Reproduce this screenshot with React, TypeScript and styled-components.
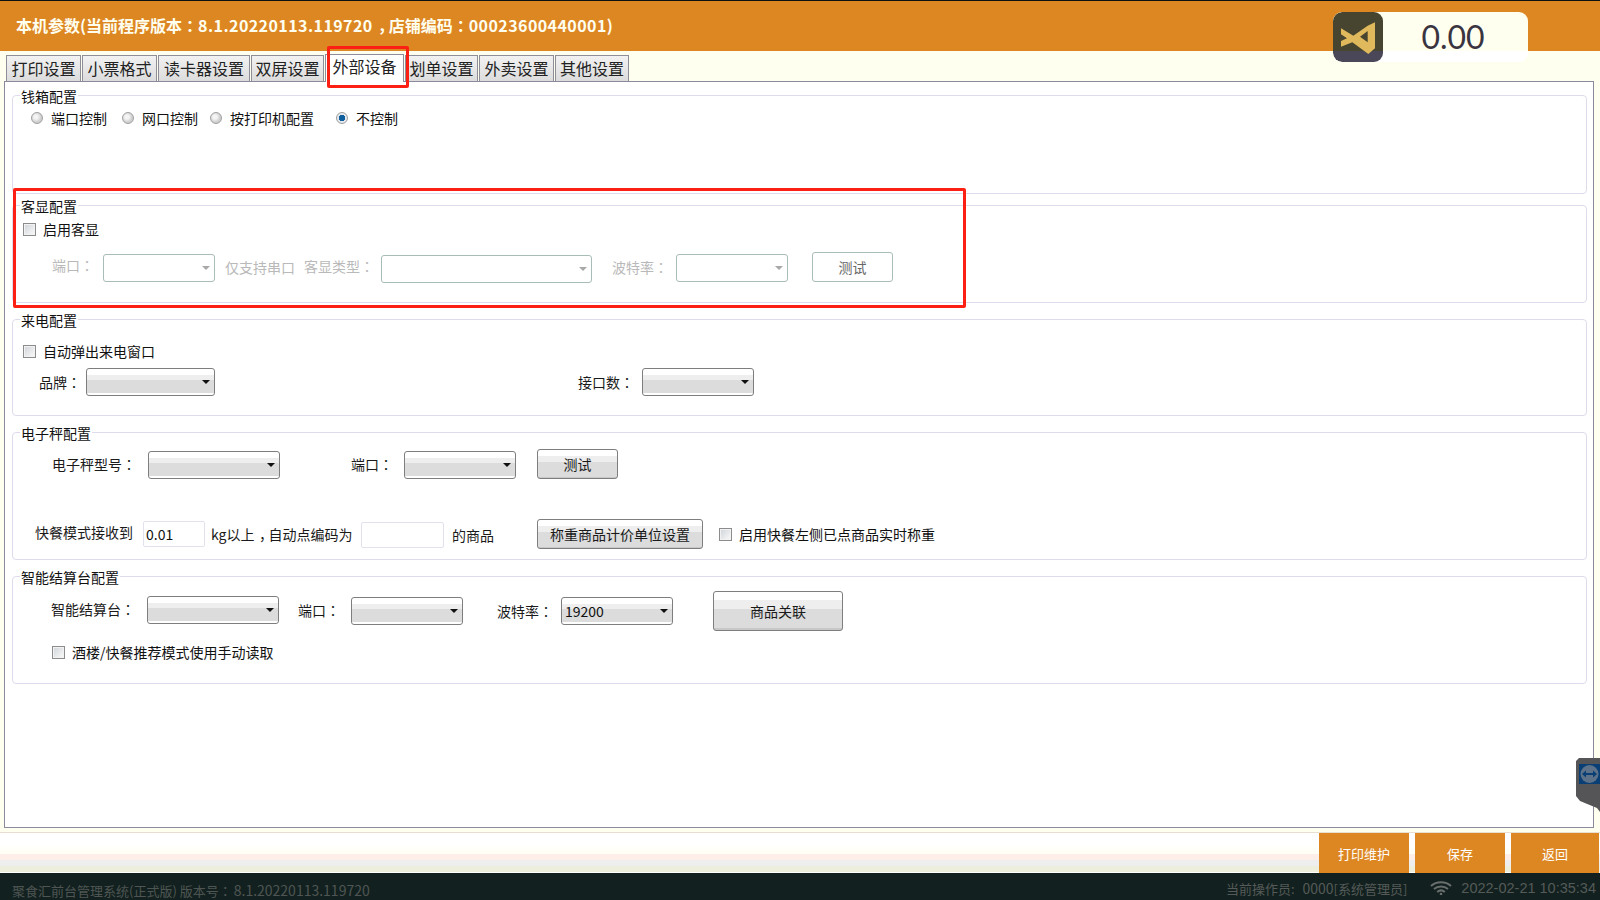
import React from "react";
import styled, { createGlobalStyle, css } from "styled-components";

const Global = createGlobalStyle`
  html, body { margin: 0; padding: 0; background: #fffff0; }
  * { box-sizing: border-box; }
  body { font-family: "Noto Sans CJK SC", "Liberation Sans", sans-serif; font-size: 14px; color: #111; }
`;

type Place = { $ml?: number; $mt?: number; $w?: number };
const placed = css<Place>`
  flex: none;
  margin-left: ${(p) => p.$ml ?? 0}px;
  margin-top: ${(p) => p.$mt ?? 0}px;
  ${(p) => (p.$w ? `width: ${p.$w}px;` : "")}
`;

const Page = styled.div`
  width: 1600px; height: 900px; display: flex; flex-direction: column;
  overflow: hidden; position: relative; background: #fffff0;
`;
const Header = styled.header`
  height: 51px; flex: none; background: #dd8723; border-top: 1px solid #111;
  padding: 0 16px; position: relative; display: flex; align-items: center;
`;
const Title = styled.h1`
  margin: 0 0 2px; font-size: 16px; font-weight: 700; color: #fffff0; line-height: 22px; white-space: nowrap;
`;
/* Punctuation sits centred in the cell in the reference, as in the TC cut. */
const Mark = styled.span`
  font-family: "Noto Sans CJK TC", sans-serif;
`;
const Comma = styled.span`
  margin-left: 0.32em; letter-spacing: -0.32em;
`;
const TitleNumber = styled.span`
  letter-spacing: 0.42px;
`;
const Amount = styled.div`
  position: absolute; left: 1333px; top: 11px; width: 195px; height: 50px; display: flex;
  border-radius: 9px; overflow: hidden;
  background: linear-gradient(#fffff0 39px, #ffffff 39px);
`;
const Logo = styled.div`
  width: 50px; height: 50px; flex: none; border-radius: 9px;
  background: linear-gradient(#47452f 39px, #4a4858 39px);
`;
const AmountValue = styled.div`
  flex: 1; text-align: center; font-family: Lato, "Liberation Sans", sans-serif; font-size: 32px;
  line-height: 50px; color: #3a3440; padding-right: 5px;
`;

const TabBar = styled.nav`
  height: 30px; flex: none; display: flex; align-items: flex-end; padding-left: 6px; gap: 1px;
  position: relative; z-index: 1;
`;
const Tab = styled.div<{ $w: number; $active?: boolean }>`
  width: ${(p) => p.$w}px; text-align: center; font-size: 16px; color: #222; white-space: nowrap;
  border: 1px solid #8e8e98;
  ${(p) =>
    p.$active
      ? `height: 28px; margin-bottom: -1px; background: #fff; border-bottom: none; line-height: 23px;`
      : `height: 26px; background: linear-gradient(#f2f2f2, #dcdcdc); border-bottom: none; line-height: 25px;`}
`;

const Panel = styled.main`
  width: 1590px; height: 747px; flex: none; margin-left: 4px; background: #fff;
  border: 1px solid #8a8a9c; padding: 13px 6px 0 7px;
`;
const Group = styled.section<{ $h: number; $gap?: number }>`
  height: ${(p) => p.$h}px; margin-top: ${(p) => p.$gap ?? 0}px;
  border: 1px solid #dedcec; border-radius: 4px;
`;
const Legend = styled.div`
  margin: -10px 0 0 7px; width: fit-content; height: 21px; padding: 0 1px; background: #fff; line-height: 20px; white-space: nowrap;
`;
const Row = styled.div<{ $mt: number }>`
  display: flex; align-items: flex-start; margin-top: ${(p) => p.$mt}px;
`;
const Label = styled.span<Place & { $off?: boolean }>`
  ${placed}
  line-height: 20px; white-space: nowrap; color: ${(p) => (p.$off ? "#b9b9b9" : "#1a1a1a")};
`;
const Choice = styled.label<Place>`
  ${placed}
  display: flex; align-items: center; gap: 8px; line-height: 20px; white-space: nowrap;
`;
const CheckChoice = styled(Choice)`
  gap: 7px;
`;
const RadioDot = styled.span<{ $on?: boolean }>`
  width: 12px; height: 12px; border-radius: 50%; flex: none; border: 1px solid #a0a0a0;
  background: ${(p) =>
    p.$on
      ? "radial-gradient(circle, #0f5f9f 0 3px, #e4e8ec 3.5px)"
      : "radial-gradient(circle at 40% 40%, #f4f4f4 0 2px, #cfcfcf 5px)"};
`;
const CheckBox = styled.span`
  width: 13px; height: 13px; flex: none; border: 1px solid #8c8c8c; background: linear-gradient(135deg, #cfd3d8, #fbfbfb);
  box-shadow: inset 0 0 0 1px #f2f2f2;
`;
const Select = styled.div<Place & { $h?: number; $off?: boolean }>`
  ${placed}
  position: relative; height: ${(p) => p.$h ?? 28}px; border-radius: 3px; padding-left: 3px;
  line-height: 26px; color: #111;
  ${(p) =>
    p.$off
      ? `border: 1px solid #a8bcb8; background: #fff;`
      : `border: 1px solid #7e7e7e; background: linear-gradient(#fff 23%, #eeeeee 23% 44%, #dcdcdc 44% 94%, #fff 94%);`}
  &::after {
    content: ""; position: absolute; right: 4px; top: 11px; border: 4px solid transparent; border-bottom: none;
    border-top-color: ${(p) => (p.$off ? "#a8a8a8" : "#111")};
  }
`;
const Button = styled.button<Place & { $h?: number; $off?: boolean }>`
  ${placed}
  height: ${(p) => p.$h ?? 30}px; padding: 0; border-radius: 3px; font: inherit; white-space: nowrap;
  ${(p) =>
    p.$off
      ? `border: 1px solid #a8bcb8; background: #fff; color: #666;`
      : `border: 1px solid #7e7e7e; color: #1a1a1a; background: linear-gradient(#fff 22%, #eeeeee 22% 44%, #dcdcdc 44% 95%, #c8c8c8 95%);`}
`;
const Input = styled.input<Place>`
  ${placed}
  height: 26px; border: 1px solid #e2e2ee; border-radius: 2px; background: #fff; padding: 0 2px;
  font: inherit; color: #111; outline: none;
`;

const Highlight = styled.div<{ $l: number; $t: number; $w: number; $h: number }>`
  position: absolute; left: ${(p) => p.$l}px; top: ${(p) => p.$t}px; width: ${(p) => p.$w}px; height: ${(p) => p.$h}px;
  border: 3px solid #fb1f14; border-radius: 2px; pointer-events: none; z-index: 3;
`;

const Bottom = styled.div`
  flex: none; height: 45px; margin-top: 0; padding: 5px 1px 0 0; display: flex; justify-content: flex-end; gap: 6px;
  background: linear-gradient(#fffff0 4px, #e8dfd2 4px 5px, #fff 5px 16px, #fffff4 26px, #fffff0 26px, #fdeeea 26px 32px, #eeeeee 32px 38px, #eeeedd 38px 44px, #fff 44px);
`;
const ActionButton = styled.button<{ $w?: number }>`
  width: ${(p) => p.$w ?? 90}px; height: 40px; border: none; padding: 0; background: #dd8723; color: #fff;
  font: inherit; font-size: 13px;
`;
const Status = styled.footer`
  flex: none; height: 27px; background: #12211f; color: #555a58; display: flex; align-items: center;
  padding: 3px 0 0 12px; font-size: 13px; white-space: nowrap;
`;
const StatusNumber = styled.span`
  font-size: 14px; margin-left: 2px;
`;
const Version = styled.span`
  flex: 1; color: #4f5553; margin-top: 4px;
`;
const Operator = styled.span`
  margin-right: 23px;
`;
const Wifi = styled.svg`
  width: 22px; height: 14px; margin-right: 9px; flex: none;
`;
const Clock = styled.span`
  margin-right: 4px; font-family: "Liberation Sans", sans-serif; font-size: 14.5px;
`;
const RemoteTab = styled.svg`
  position: absolute; left: 1575px; top: 758px; width: 25px; height: 54px; z-index: 2;
`;

const disabled = { $off: true };
const Colon = () => <Mark>：</Mark>;

export default function App() {
  return (
    <Page>
      <Global />
      <Header>
        <Title>
          本机参数(当前程序版本<Colon /><TitleNumber>8.1.20220113.119720</TitleNumber><Comma>，</Comma>店铺编码<Colon /><TitleNumber>00023600440001</TitleNumber>)
        </Title>
        <Amount>
          <Logo>
            <svg viewBox="24 21 150 150" width="50" height="50">
              <polygon points="48,70 85,92 128,62 150,52 150,130 130,147 82,112 48,125 48,108 66,100 48,88" fill="#e0b95c" />
              <polygon points="105,95 128,78 128,112" fill="#47452f" />
            </svg>
          </Logo>
          <AmountValue>0.00</AmountValue>
        </Amount>
      </Header>
      <TabBar>
        <Tab $w={75}>打印设置</Tab>
        <Tab $w={75}>小票格式</Tab>
        <Tab $w={92}>读卡器设置</Tab>
        <Tab $w={73}>双屏设置</Tab>
        <Tab $w={79} $active>外部设备</Tab>
        <Tab $w={73}>划单设置</Tab>
        <Tab $w={75}>外卖设置</Tab>
        <Tab $w={74}>其他设置</Tab>
      </TabBar>
      <Panel>
        <Group $h={99}>
          <Legend>钱箱配置</Legend>
          <Row $mt={1}>
            <Choice $ml={18}><RadioDot />端口控制</Choice>
            <Choice $ml={15}><RadioDot />网口控制</Choice>
            <Choice $ml={12}><RadioDot />按打印机配置</Choice>
            <Choice $ml={22}><RadioDot $on />不控制</Choice>
          </Row>
        </Group>
        <Group $h={98} $gap={11}>
          <Legend>客显配置</Legend>
          <Row $mt={2}>
            <CheckChoice $ml={10}><CheckBox />启用客显</CheckChoice>
          </Row>
          <Row $mt={13}>
            <Label {...disabled} $ml={39} $w={42} $mt={3}>端口<Colon /></Label>
            <Select {...disabled} $ml={9} $w={112} $mt={2} />
            <Label {...disabled} $ml={10} $w={70} $mt={5}>仅支持串口</Label>
            <Label {...disabled} $ml={9} $w={70} $mt={4}>客显类型<Colon /></Label>
            <Select {...disabled} $ml={7} $w={211} $mt={3} />
            <Label {...disabled} $ml={20} $w={56} $mt={5}>波特率<Colon /></Label>
            <Select {...disabled} $ml={8} $w={112} $mt={2} />
            <Button {...disabled} $ml={24} $w={81}>测试</Button>
          </Row>
        </Group>
        <Group $h={97} $gap={16}>
          <Legend>来电配置</Legend>
          <Row $mt={10}>
            <CheckChoice $ml={10}><CheckBox />自动弹出来电窗口</CheckChoice>
          </Row>
          <Row $mt={7}>
            <Label $ml={26} $w={42} $mt={4}>品牌<Colon /></Label>
            <Select $ml={5} $w={129} />
            <Label $ml={363} $w={56} $mt={4}>接口数<Colon /></Label>
            <Select $ml={8} $w={112} />
          </Row>
        </Group>
        <Group $h={128} $gap={16}>
          <Legend>电子秤配置</Legend>
          <Row $mt={5}>
            <Label $ml={39} $w={84} $mt={5}>电子秤型号<Colon /></Label>
            <Select $ml={12} $w={132} $mt={2} />
            <Label $ml={71} $w={42} $mt={5}>端口<Colon /></Label>
            <Select $ml={11} $w={112} $mt={2} />
            <Button $ml={21} $w={81}>测试</Button>
          </Row>
          <Row $mt={40}>
            <Label $ml={22} $w={98} $mt={3}>快餐模式接收到</Label>
            <Input $ml={10} $w={62} $mt={2} defaultValue="0.01" />
            <Label $ml={6} $w={143} $mt={5}>kg以上<Comma>，</Comma>自动点编码为</Label>
            <Input $ml={7} $w={83} $mt={3} />
            <Label $ml={8} $w={42} $mt={6}>的商品</Label>
            <Button $ml={43} $w={166}>称重商品计价单位设置</Button>
            <CheckChoice $ml={16} $mt={5}><CheckBox />启用快餐左侧已点商品实时称重</CheckChoice>
          </Row>
        </Group>
        <Group $h={108} $gap={16}>
          <Legend>智能结算台配置</Legend>
          <Row $mt={3}>
            <Label $ml={38} $w={84} $mt={8}>智能结算台<Colon /></Label>
            <Select $ml={12} $w={132} $mt={5} />
            <Label $ml={19} $w={42} $mt={9}>端口<Colon /></Label>
            <Select $ml={11} $w={112} $mt={6} />
            <Label $ml={34} $w={56} $mt={10}>波特率<Colon /></Label>
            <Select $ml={8} $w={112} $mt={6}>19200</Select>
            <Button $ml={40} $w={130} $h={40}>商品关联</Button>
          </Row>
          <Row $mt={11}>
            <CheckChoice $ml={39}><CheckBox />酒楼/快餐推荐模式使用手动读取</CheckChoice>
          </Row>
        </Group>
      </Panel>
      <Bottom>
        <ActionButton>打印维护</ActionButton>
        <ActionButton>保存</ActionButton>
        <ActionButton $w={88}>返回</ActionButton>
      </Bottom>
      <Status>
        <Version>聚食汇前台管理系统(正式版) 版本号<Colon /><StatusNumber>8.1.20220113.119720</StatusNumber></Version>
        <Operator>当前操作员:&nbsp;&nbsp;<StatusNumber>0000</StatusNumber>[系统管理员]</Operator>
        <Wifi viewBox="0 0 22 14">
          <path d="M1 5C6.5 0 15.5 0 21 5M4 8C8 4.5 14 4.5 18 8M7.2 11C9.5 9 12.5 9 14.8 11" fill="none" stroke="#6a6f6d" strokeWidth="2" />
          <circle cx="11" cy="13" r="1.3" fill="#6a6f6d" />
        </Wifi>
        <Clock>2022-02-21 10:35:34</Clock>
      </Status>

      <Highlight $l={327} $t={46} $w={82} $h={42} />
      <Highlight $l={13} $t={188} $w={953} $h={120} />
      <RemoteTab viewBox="0 0 25 54">
        <path d="M4 0H25V54L22 50L5 43L1 38V3Z" fill="#555558" />
        <rect x="4" y="6" width="21" height="20" fill="#0a3f75" />
        <circle cx="14.5" cy="16" r="9" fill="#5d7288" />
        <path d="M7 16L11 12.5V15H18V12.5L22 16L18 19.5V17H11V19.5Z" fill="#0a3f75" />
      </RemoteTab>
    </Page>
  );
}
